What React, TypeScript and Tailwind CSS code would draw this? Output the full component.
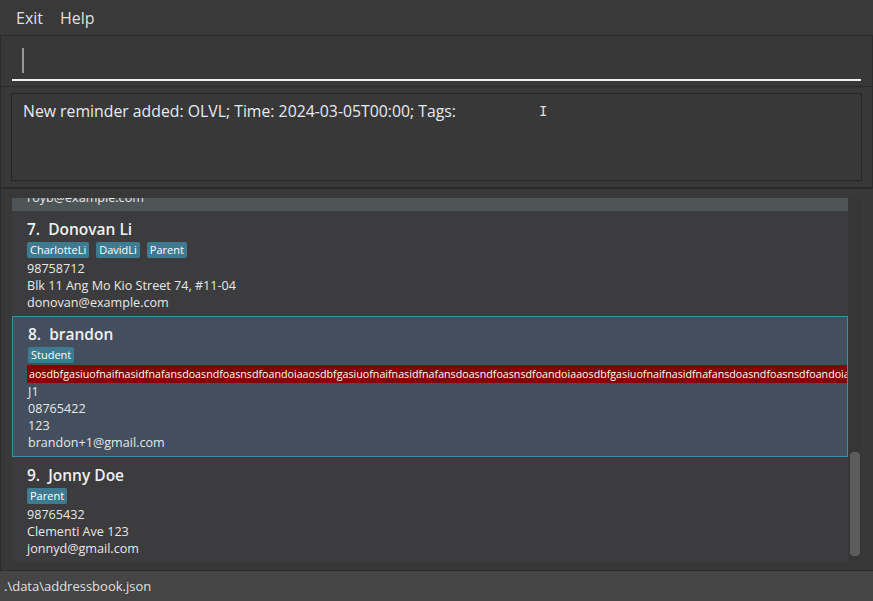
import React from "react";

const font = { fontFamily: '"Open Sans", "Noto Sans", sans-serif' };

function Tag({ children }: { children: React.ReactNode }) {
  return (
    <span className="inline-block bg-[#3e7b91] text-white text-[11px] leading-[16px] px-[3px] rounded-[2px]">
      {children}
    </span>
  );
}

const long =
  "aosdbfgasiuofnaifnasidfnafansdoasndfoasnsdfoandoiaaosdbfgasiuofnaifnasidfnafansdoasndfoasnsdfoandoiaaosdbfgasiuofnaifnasidfnafansdoasndfoasnsdfoandoiaaosdbfgasiuofnaifnasidfnafansdoasndfoasnsdfoandoia";

const detail = "text-[12.6px] leading-[17px]";
const name = "text-[15.5px] font-semibold leading-[22px] text-[#f0f0f0]";

export default function App() {
  return (
    <div className="w-[873px] h-[601px] flex flex-col bg-[#383838] text-[#e8e8e8] overflow-hidden" style={font}>
      {/* menu */}
      <div className="h-[35px] flex items-center gap-[17px] px-[16px] text-[16px] text-[#e0e0e0] bg-[#393939]">
        <span>Exit</span>
        <span>Help</span>
      </div>
      <div className="h-px bg-[#2a2a2a]" />
      {/* command box */}
      <div className="h-[50px] border-l border-r border-[#2c2c2c] px-[11px] pt-[11px]">
        <div className="h-[34px] border-b-2 border-[#f0f0f0] flex items-start pl-[10px] pt-[1px]">
          <div className="w-[2px] h-[25px] bg-[#9a9a9a]" />
        </div>
      </div>
      <div className="h-px bg-[#2a2a2a]" />
      {/* result */}
      <div className="h-[100px] px-[10px] pt-[6px] pb-[6px] border-l border-r border-[#2c2c2c]">
        <div className="h-full border border-[#262626] bg-[#383838] pl-[11px] pt-[6px] text-[15.8px] text-[#e8eaf2] relative">
          New reminder added: OLVL; Time: 2024-03-05T00:00; Tags:
          <span className="absolute left-[527px] top-[8px] text-[#ddd] text-[14px] leading-[18px]" style={{ fontFamily: '"DejaVu Sans Mono", monospace' }}>
            I
          </span>
        </div>
      </div>
      <div className="h-[2px] bg-[#2a2a2a]" />
      {/* list pane */}
      <div className="flex-1 flex flex-col px-[11px] pt-[9px] pb-[9px] border-l border-[#2c2c2c] min-h-0">
        <div className="flex-1 flex min-h-0 overflow-hidden">
          <div className="flex-1 flex flex-col min-w-0 overflow-hidden">
            {/* partial item */}
            <div className="h-[13px] bg-[#4e5557] overflow-hidden pl-[15px]">
              <div className={`${detail} -mt-[9px]`}>royb@example.com</div>
            </div>
            {/* item 7 */}
            <div className="h-[105px] bg-[#3c3c3e] pl-[15px] pt-[7px] flex flex-col">
              <div className={name}>7.&nbsp;&nbsp;Donovan Li</div>
              <div className="flex gap-[7px] mt-[2px]">
                <Tag>CharlotteLi</Tag>
                <Tag>DavidLi</Tag>
                <Tag>Parent</Tag>
              </div>
              <div className={`${detail} mt-[2px]`}>98758712</div>
              <div className={detail}>Blk 11 Ang Mo Kio Street 74, #11-04</div>
              <div className={detail}>donovan@example.com</div>
            </div>
            {/* item 8 selected */}
            <div className="h-[141px] bg-[#434e5f] border border-[#3b8ea5] pl-[15px] pt-[6px] flex flex-col overflow-hidden">
              <div className={name}>8.&nbsp;&nbsp;brandon</div>
              <div className="flex mt-[2px]">
                <Tag>Student</Tag>
              </div>
              <div className="mt-[2px] -ml-[1px] h-[18px] bg-[#870000] text-white text-[10.7px] leading-[18px] pl-[2px] whitespace-nowrap overflow-hidden">
                {long}
              </div>
              <div className={detail}>J1</div>
              <div className={detail}>08765422</div>
              <div className={detail}>123</div>
              <div className={detail}>brandon+1@gmail.com</div>
            </div>
            {/* item 9 */}
            <div className="flex-1 bg-[#3c3c3e] pl-[15px] pt-[7px] flex flex-col">
              <div className={name}>9.&nbsp;&nbsp;Jonny Doe</div>
              <div className="flex mt-[2px]">
                <Tag>Parent</Tag>
              </div>
              <div className={`${detail} mt-[2px]`}>98765432</div>
              <div className={detail}>Clementi Ave 123</div>
              <div className={detail}>jonnyd@gmail.com</div>
            </div>
          </div>
          {/* scrollbar */}
          <div className="w-[14px] bg-[#363636] flex flex-col justify-end items-center pb-[5px]">
            <div className="w-[10px] h-[104px] rounded-[4px] bg-[#5c5c5c]" />
          </div>
        </div>
      </div>
      {/* status */}
      <div className="h-px bg-[#2a2a2a]" />
      <div className="h-[30px] bg-[#454545] flex items-center pl-[4px] pt-[2px] text-[13px] text-[#e0e0e0]">
        .\data\addressbook.json
      </div>
    </div>
  );
}
